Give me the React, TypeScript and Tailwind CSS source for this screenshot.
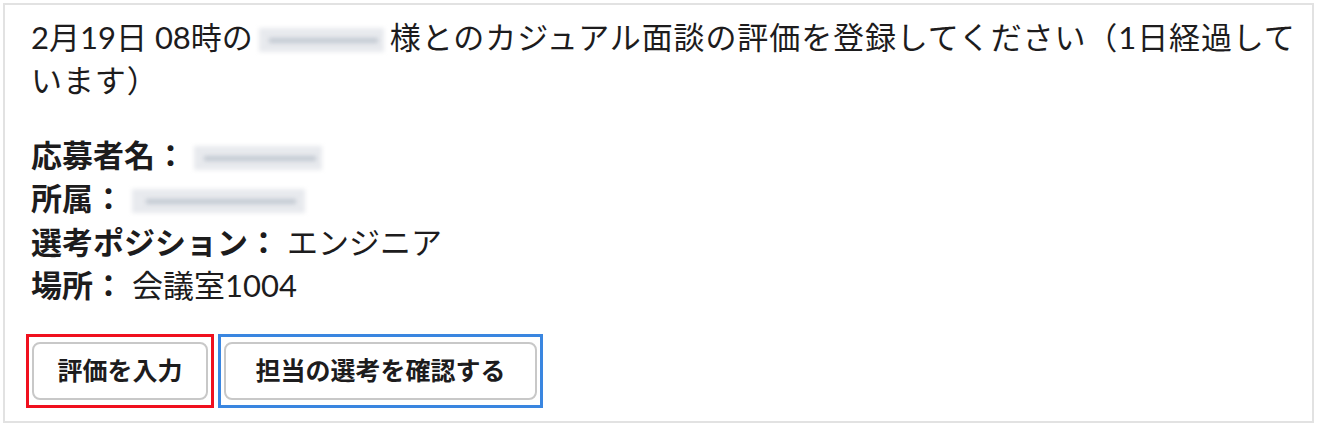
import React from "react";

// Blurred (redacted) name block
const Redacted: React.FC<{ width: string }> = ({ width }) => (
  <span className={`relative inline-block h-[24px] align-[-3px] ${width}`}>
    <span className="absolute inset-0 bg-[#e8eaee] blur-[2px]" />
    <span className="absolute left-[8%] right-[5%] top-[10px] h-[5px] bg-[#c3c9d2] blur-[2px]" />
  </span>
);

const App: React.FC = () => {
  return (
    <div
      className="m-[3px] border-2 border-[#e2e2e2] bg-white pt-[11px] pb-[13px] pl-[26px] pr-[16px] text-[#1d1c1d]"
      style={{ fontFamily: 'Lato, "Noto Sans CJK JP", sans-serif' }}
    >
      {/* Message */}
      <p className="text-[31px] leading-[43px]">
        2月19日 08時の<Redacted width="w-[125px] mx-[6px]" />
        <span className="tracking-[0.9px]">様とのカジュアル面談の評価を登録してください（1日経過しています）</span>
      </p>

      {/* Details */}
      <div className="mt-[32px] text-[31px] leading-[43.3px]">
        <div>
          <span className="font-bold">応募者名：</span> <Redacted width="w-[128px]" />
        </div>
        <div>
          <span className="font-bold">所属：</span> <Redacted width="w-[173px]" />
        </div>
        <div>
          <span className="font-bold">選考ポジション：</span> エンジニア
        </div>
        <div>
          <span className="font-bold">場所：</span> 会議室1004
        </div>
      </div>

      {/* Actions */}
      <div className="-ml-[5px] mt-[27px] flex gap-[4px]">
        <div className="border-[3px] border-[#f0101e] px-[3px] py-[5px]">
          <button className="flex h-[58px] w-[176px] items-center justify-center rounded-[8px] border-2 border-[#c8c8c8] bg-white text-[25px] font-bold">
            評価を入力
          </button>
        </div>
        <div className="border-[3px] border-[#3a86e0] px-[3px] py-[5px]">
          <button className="flex h-[58px] w-[313px] items-center justify-center rounded-[8px] border-2 border-[#c8c8c8] bg-white text-[25px] font-bold">
            担当の選考を確認する
          </button>
        </div>
      </div>
    </div>
  );
};

export default App;
